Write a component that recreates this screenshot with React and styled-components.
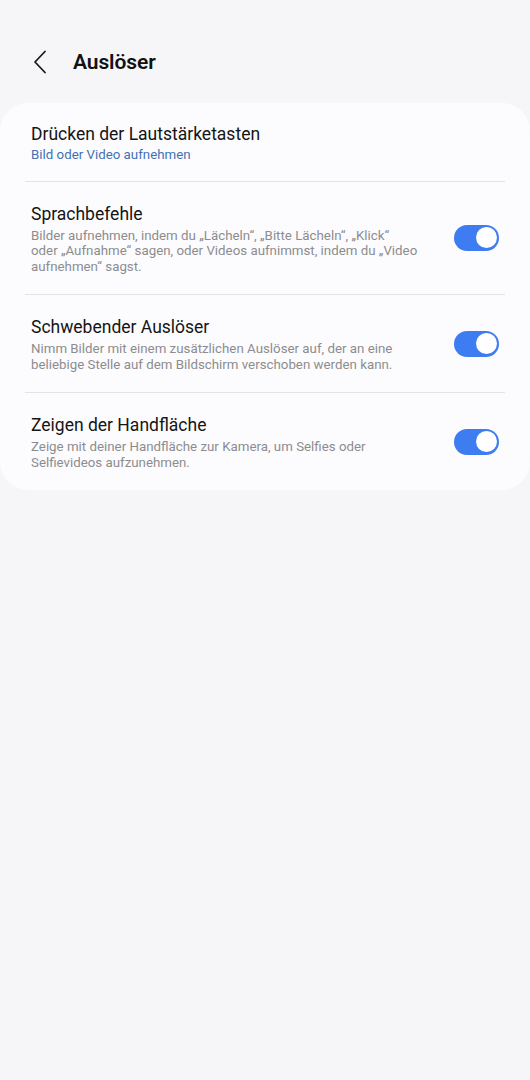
import styled, { createGlobalStyle } from 'styled-components'

const GlobalStyle = createGlobalStyle`
  html, body {
    margin: 0;
    padding: 0;
    background: #f6f6f8;
    font-family: Roboto, "Noto Sans", "Liberation Sans", sans-serif;
  }
`

const Page = styled.div`
  min-height: 1080px;
  background: #f6f6f8;
`

const Header = styled.div`
  display: flex;
  align-items: center;
  padding: 31px 0 10px 28px;
  box-sizing: border-box;
  height: 103px;
`

const BackButton = styled.button`
  border: none;
  background: none;
  padding: 0;
  width: 24px;
  height: 26px;
  display: flex;
  align-items: center;
  justify-content: center;
  margin-right: 21px;
`

const Title = styled.h1`
  margin: 0;
  font-size: 21px;
  font-weight: 600;
  color: #111;
  letter-spacing: -0.1px;
`

const Card = styled.div`
  background: #fcfcfe;
  border-radius: 28px;
  padding: 0 25px;
`

const Row = styled.div`
  display: flex;
  align-items: center;
  padding: ${p => p.$pad || '20px'} 6px ${p => p.$pad || '20px'} 6px;
  border-bottom: ${p => (p.$last ? 'none' : '1px solid #e4e4e6')};
`

const Text = styled.div`
  flex: 1;
  padding-right: 30px;
`

const RowTitle = styled.div`
  font-size: 17.5px;
  line-height: 24px;
  color: #151515;
`

const Sub = styled.div`
  font-size: 13.3px;
  line-height: 15.5px;
  white-space: pre-line;
  color: ${p => (p.$accent ? '#4272b4' : '#8c8c8e')};
  margin-top: ${p => (p.$accent ? '1px' : '2px')};
`

const Toggle = styled.div`
  width: 45px;
  height: 26px;
  border-radius: 13px;
  background: #3e7cf1;
  flex-shrink: 0;
  display: flex;
  align-items: center;
  justify-content: flex-end;
  padding: 0 2.5px;
  box-sizing: border-box;
`

const Knob = styled.div`
  width: 21px;
  height: 21px;
  border-radius: 50%;
  background: #fff;
`

const items = [
  {
    title: 'Sprachbefehle',
    desc: 'Bilder aufnehmen, indem du „Lächeln“, „Bitte Lächeln“, „Klick“\noder „Aufnahme“ sagen, oder Videos aufnimmst, indem du „Video\naufnehmen“ sagst.',
  },
  {
    title: 'Schwebender Auslöser',
    desc: 'Nimm Bilder mit einem zusätzlichen Auslöser auf, der an eine\nbeliebige Stelle auf dem Bildschirm verschoben werden kann.',
  },
  {
    title: 'Zeigen der Handfläche',
    desc: 'Zeige mit deiner Handfläche zur Kamera, um Selfies oder\nSelfievideos aufzunehmen.',
  },
]

const App = () => {
  return (
    <Page>
      <GlobalStyle />
      <Header>
        <BackButton aria-label="Zurück">
          <svg width="14" height="24" viewBox="0 0 14 24" fill="none">
            <path d="M12 1.5 L2 12 L12 22.5" stroke="#1a1a1a" strokeWidth="1.8" strokeLinecap="round" strokeLinejoin="round" />
          </svg>
        </BackButton>
        <Title>Auslöser</Title>
      </Header>
      <Card>
        <Row $pad="18.5px">
          <Text>
            <RowTitle>Drücken der Lautstärketasten</RowTitle>
            <Sub $accent>Bild oder Video aufnehmen</Sub>
          </Text>
        </Row>
        {items.map((it, i) => (
          <Row key={it.title} $last={i === items.length - 1}>
            <Text>
              <RowTitle>{it.title}</RowTitle>
              <Sub>{it.desc}</Sub>
            </Text>
            <Toggle>
              <Knob />
            </Toggle>
          </Row>
        ))}
      </Card>
    </Page>
  )
}

export default App
